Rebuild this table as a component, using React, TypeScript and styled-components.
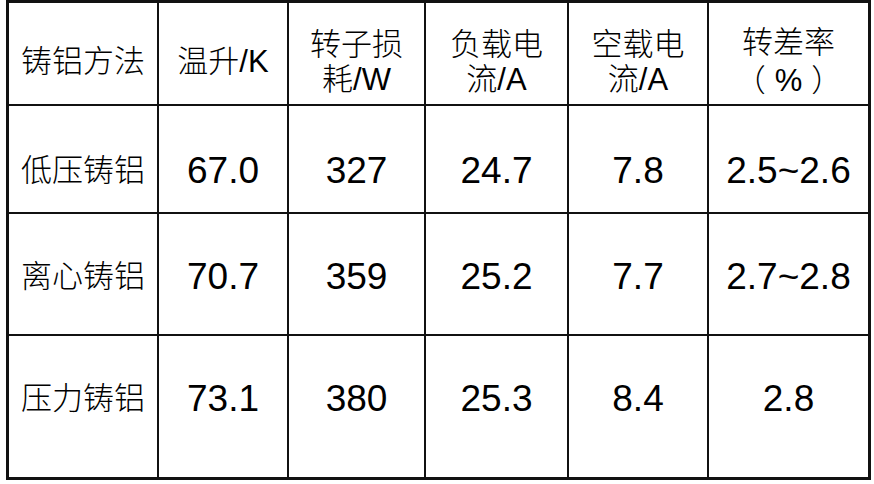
import React from "react";
import styled, { createGlobalStyle } from "styled-components";

const Global = createGlobalStyle`
  html, body { margin: 0; padding: 0; background: #ffffff; }
  body { font-family: "Liberation Sans", "Noto Sans CJK SC", sans-serif; }
`;

const Page = styled.div`
  padding-left: 6px;
  width: 874px;
  height: 484px;
  box-sizing: border-box;
`;

const Grid = styled.div`
  display: grid;
  grid-template-columns: 148px 128px 135px 141px 138px 159px;
  grid-template-rows: 101px 106px 120px 141px;
  gap: 2px;
  padding: 3px;
  width: 865px;
  box-sizing: border-box;
  background: #111111;
`;

const Cell = styled.div<{ $shift: number; $num?: boolean }>`
  background: #ffffff;
  display: flex;
  align-items: center;
  justify-content: center;
  text-align: center;
  box-sizing: border-box;
  padding-top: ${(p) => (p.$shift > 0 ? p.$shift * 2 : 0)}px;
  padding-bottom: ${(p) => (p.$shift < 0 ? -p.$shift * 2 : 0)}px;
  color: #000000;
  font-family: "Liberation Sans", "Noto Sans CJK SC", sans-serif;
  font-size: ${(p) => (p.$num ? 37 : 31)}px;
  font-weight: 300;
  line-height: 35px;
  white-space: nowrap;
`;

const Paren = styled.span<{ $open?: boolean }>`
  display: inline-block;
  font-family: "Noto Sans CJK SC", sans-serif;
  font-weight: 300;
  margin-left: ${(p) => (p.$open ? 0 : 9)}px;
  margin-right: ${(p) => (p.$open ? 9 : 0)}px;
`;

const header: React.ReactNode[] = [
  "铸铝方法",
  "温升/K",
  <>转子损<br />耗/W</>,
  <>负载电<br />流/A</>,
  <>空载电<br />流/A</>,
  <>转差率<br /><Paren $open>（</Paren>%<Paren>）</Paren></>,
];

const rows = [
  { shift: 11, cells: ["低压铸铝", "67.0", "327", "24.7", "7.8", "2.5~2.6"] },
  { shift: 2, cells: ["离心铸铝", "70.7", "359", "25.2", "7.7", "2.7~2.8"] },
  { shift: -8, cells: ["压力铸铝", "73.1", "380", "25.3", "8.4", "2.8"] },
];

export default function App() {
  return (
    <>
      <Global />
      <Page>
        <Grid>
          {header.map((h, i) => (
            <Cell key={"h" + i} $shift={8}>
              <div>{h}</div>
            </Cell>
          ))}
          {rows.map((r, ri) =>
            r.cells.map((c, ci) => (
              <Cell key={ri + "-" + ci} $shift={r.shift} $num={ci > 0}>
                {c}
              </Cell>
            ))
          )}
        </Grid>
      </Page>
    </>
  );
}
